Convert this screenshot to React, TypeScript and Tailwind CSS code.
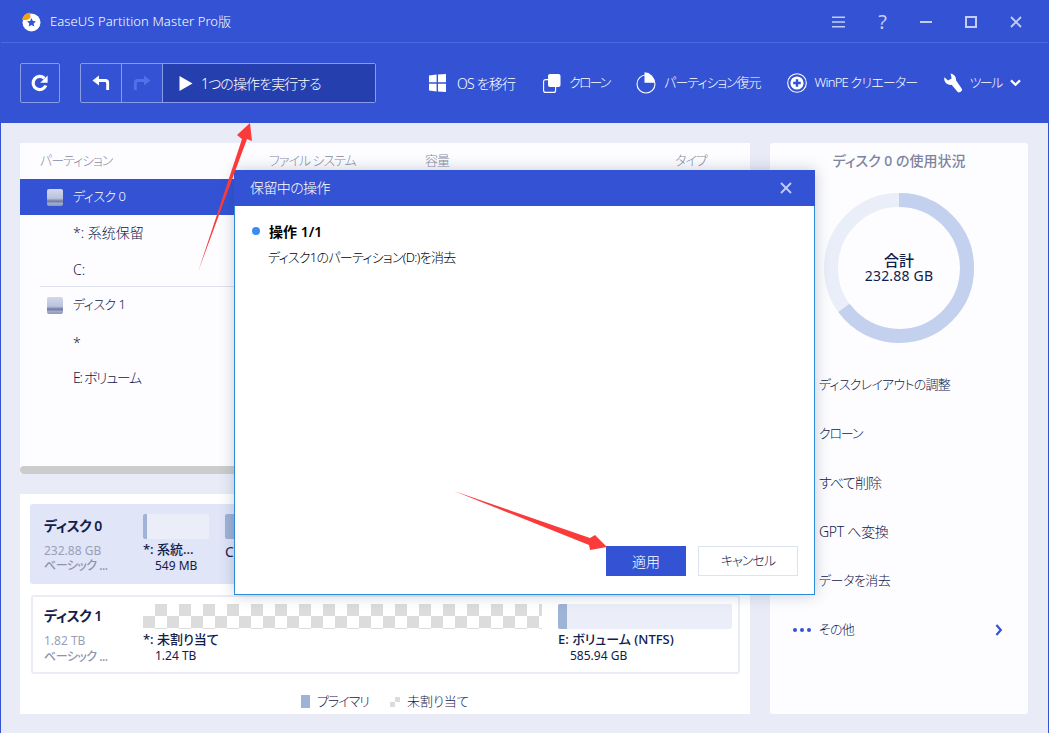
import React from "react";

const jp = "font-['Noto_Sans','Noto_Sans_CJK_JP',sans-serif] [font-feature-settings:'palt']";

function Logo() {
  return (
    <svg width="20" height="20" viewBox="0 0 20 20">
      <circle cx="10.5" cy="10.5" r="9" fill="#fff" />
      <path d="M1 8 A9 9 0 0 1 9 0.5 L9.5 6 L6 8 Z" fill="#f2a20c" />
      <path d="M10.5 6l1.4 2.9 3.1.4-2.3 2.1.6 3.1-2.8-1.5-2.8 1.5.6-3.1-2.3-2.1 3.1-.4z" fill="#3353d4" />
    </svg>
  );
}

function Refresh() {
  return (
    <svg width="20" height="20" viewBox="0 0 20 20" fill="none">
      <path d="M15.8 12.5A6.6 6.6 0 1 1 14.4 5.3" stroke="#fff" strokeWidth="3.2" />
      <path d="M17.6 2.4v7.4h-7.4z" fill="#fff" />
    </svg>
  );
}

function Undo({ color }: { color: string }) {
  return (
    <svg width="18" height="16" viewBox="0 0 18 16" fill="none">
      <path d="M7 0.5v3.6h6.5a3.6 3.6 0 0 1 3.6 3.6V15h-2.9V8.2a1.2 1.2 0 0 0-1.2-1.2H7v3.6L0.5 5.5z" fill={color} />
    </svg>
  );
}

function Windows() {
  return (
    <svg width="17" height="18" viewBox="0 0 17 18" fill="#fff" className="shrink-0">
      <path d="M0 1.5L7.6 0.6V8.3H0zM9 0.4L17 0V8.3H9zM0 9.7H7.6V17.4L0 16.5zM9 9.7H17V18L9 17.6z" />
    </svg>
  );
}

function Clone() {
  return (
    <svg width="18" height="20" viewBox="0 0 18 20" fill="none" className="shrink-0">
      <rect x="0.6" y="6.6" width="12" height="12.8" rx="2" stroke="#fff" strokeWidth="1.1" />
      <rect x="5" y="1" width="12.5" height="13" rx="2" fill="#fff" />
    </svg>
  );
}

function Pie() {
  return (
    <svg width="20" height="24" viewBox="0 0 20 24" fill="none" className="shrink-0">
      <circle cx="10" cy="13" r="9" stroke="#fff" strokeWidth="1.1" />
      <path d="M8.5 1.2A10.5 10.5 0 0 1 18.8 11.8H8.5z" fill="#fff" />
    </svg>
  );
}

function PlusCircle() {
  return (
    <svg width="20" height="20" viewBox="0 0 20 20" fill="none" className="shrink-0">
      <circle cx="10" cy="10" r="9.3" stroke="#fff" strokeWidth="1.1" />
      <circle cx="10" cy="10" r="6.6" fill="#fff" />
      <path d="M10 6.2v7.6M6.2 10h7.6" stroke="#3353d4" strokeWidth="2.4" />
    </svg>
  );
}

function Wrench() {
  return (
    <svg width="18" height="20" viewBox="0 0 18 20" fill="#fff" className="shrink-0">
      <path d="M6.6 0.6A6 6 0 0 1 12 7.2L17.6 15.6a2 2 0 0 1-.5 2.8l-1 .7a2 2 0 0 1-2.8-.5L7.6 11.8A6.2 6.2 0 0 1 .4 4.2L4 7.6 7.6 5.6 6.6 .6z" />
    </svg>
  );
}

function Chevron({ color, dir }: { color: string; dir: "down" | "right" }) {
  return dir === "down" ? (
    <svg width="11" height="8" viewBox="0 0 11 8" fill="none">
      <path d="M1 1.4l4.5 4.4L10 1.4" stroke={color} strokeWidth="2.2" />
    </svg>
  ) : (
    <svg width="8" height="12" viewBox="0 0 8 12" fill="none">
      <path d="M1.4 1l4.4 5-4.4 5" stroke={color} strokeWidth="2.2" />
    </svg>
  );
}

function DiskIcon() {
  return <div className="w-4 h-[17px] rounded-[2px] bg-[linear-gradient(#d3d9ec_0%,#b9c2dd_55%,#6f7aa5_72%,#a2abca_85%,#8d97bb_100%)]" />;
}

function ToolItem({ icon, label, className, text }: { icon: React.ReactNode; label: string; className: string; text: string }) {
  return (
    <div className={`flex items-center shrink-0 text-white font-light ${className}`}>
      {icon}
      <span className={`whitespace-nowrap ${text}`}>{label}</span>
    </div>
  );
}

function TreeRow({ label, disk, selected, text }: { label: string; disk?: boolean; selected?: boolean; text: string }) {
  return (
    <div className={`h-9 flex items-center font-light ${selected ? "bg-[#3353d4] text-white" : "text-[#11204a]"} ${disk ? "pl-[27px] gap-[10px]" : "pl-[53px]"}`}>
      {disk && <DiskIcon />}
      <span className={text}>{label}</span>
    </div>
  );
}

function MenuRow({ label, text }: { label: string; text: string }) {
  return <div className={`h-[49px] flex items-center pl-[49px] font-light text-[#11204a] ${text}`}>{label}</div>;
}

function PartLabel({ title, size }: { title: string; size: string }) {
  return (
    <div className="whitespace-nowrap">
      <div className="h-[15px] mt-[3px] leading-[15px] text-[13px] font-medium text-[#11204a]">{title}</div>
      <div className="h-[15px] mt-[1px] pl-3 leading-[15px] text-[12px] text-[#11204a]">{size}</div>
    </div>
  );
}

export default function App() {
  return (
    <div className={`w-[1049px] h-[733px] relative overflow-hidden bg-[#e9ecf7] border-x border-[#3353d4] ${jp}`}>
      {/* Header */}
      <div className="h-[123px] bg-[#3353d4] flex flex-col">
        <div className="h-[41px] mt-px flex items-center pl-5 text-white shrink-0">
          <Logo />
          <span className="ml-[9px] text-[13px] tracking-[0.1px] font-light whitespace-nowrap">EaseUS Partition Master Pro版</span>
          <div className="ml-auto flex items-center text-[#c3cef2]">
            <svg width="13" height="12" viewBox="0 0 13 12" fill="#c3cef2"><path d="M0 0.5h13v1.6H0zM0 5.2h13v1.6H0zM0 9.9h13v1.6H0z" /></svg>
            <span className="ml-[32px] w-[11px] text-[20px] leading-none text-center font-normal">?</span>
            <svg className="ml-[32px]" width="12" height="2" viewBox="0 0 12 2" fill="#c3cef2"><path d="M0 0h12v2H0z" /></svg>
            <svg className="ml-[33px]" width="12" height="12" viewBox="0 0 12 12" fill="none"><rect x="1" y="1" width="10" height="10" stroke="#c3cef2" strokeWidth="2" /></svg>
            <svg className="ml-[33px] mr-[26px]" width="12" height="12" viewBox="0 0 12 12" fill="none"><path d="M1 1l10 10M11 1L1 11" stroke="#c3cef2" strokeWidth="1.8" /></svg>
          </div>
        </div>
        <div className="h-px bg-[#4a6ae4] shrink-0" />
        <div className="flex-1 flex items-center pl-[19px]">
          <div className="w-10 h-10 shrink-0 border border-[#8a9ce8] rounded-[2px] flex items-center justify-center">
            <Refresh />
          </div>
          <div className="ml-5 w-[296px] h-10 shrink-0 border border-[#8a9ce8] rounded-[2px] flex">
            <div className="w-[41px] border-r border-[#8a9ce8] flex items-center justify-center"><Undo color="#fff" /></div>
            <div className="w-[41px] border-r border-[#8a9ce8] flex items-center justify-center">
              <div className="-scale-x-100 flex"><Undo color="#4f71ea" /></div>
            </div>
            <div className="flex-1 bg-[#2540ae] flex items-center pl-4 text-white text-[14px] tracking-[-0.9px] font-light">
              <svg width="14" height="15" viewBox="0 0 14 15" fill="#fff"><path d="M0.5 0L13.5 7.5 0.5 15z" /></svg>
              <span className="ml-2 whitespace-nowrap">1つの操作を実行する</span>
            </div>
          </div>
          <ToolItem className="ml-[53px] gap-[11px]" text="text-[14px] tracking-[-0.8px]" icon={<Windows />} label="OS を移行" />
          <ToolItem className="ml-[28px] gap-2" text="text-[13px] tracking-[-2px]" icon={<Clone />} label="クローン" />
          <ToolItem className="ml-[27px] gap-2" text="text-[13px] tracking-[-1px]" icon={<Pie />} label="パーティション復元" />
          <ToolItem className="ml-[26px] gap-2" text="text-[13px] tracking-[-0.8px]" icon={<PlusCircle />} label="WinPE クリエーター" />
          <ToolItem className="ml-[27px] gap-[7px]" text="text-[13px] tracking-[-1.5px]" icon={<Wrench />} label="ツール" />
          <div className="ml-2 shrink-0"><Chevron color="#fff" dir="down" /></div>
        </div>
      </div>

      {/* Body */}
      <div className="flex pl-[19px] pt-5 gap-5">
        <div className="w-[730px] flex flex-col">
          <div className="h-[331px] bg-[#fdfdff] relative flex flex-col">
            <div className="h-9 pb-px flex items-center text-[13px] tracking-[-1px] font-light text-[#868ca5] shrink-0">
              <span className="ml-5 w-[229px]">パーティション</span>
              <span className="w-[156px]">ファイル システム</span>
              <span className="w-[250px]">容量</span>
              <span>タイプ</span>
            </div>
            <TreeRow text="text-[13px] tracking-[-0.5px]" label="ディスク 0" disk selected />
            <TreeRow text="text-[14px] pb-px" label="*: 系统保留" />
            <TreeRow text="text-[14px]" label="C:" />
            <div className="h-px ml-5 bg-[#dfe2ee] -mt-px" />
            <TreeRow text="text-[13px] tracking-[-0.5px]" label="ディスク 1" disk />
            <TreeRow text="text-[14px] pt-[2px]" label="*" />
            <TreeRow text="text-[14px] tracking-[-1.3px]" label="E: ボリューム" />
            <div className="mt-auto h-2 w-[640px] rounded-full bg-[#cccccc]" />
          </div>

          <div className="mt-[20px] h-[220px] bg-white flex flex-col px-[10px] pt-[10px]">
            <div className="h-[80px] bg-[#e0e5f7] rounded-[3px] flex pl-[14px] pt-[10px]">
              <div className="w-[99px]">
                <div className="h-6 leading-6 text-[14px] tracking-[-0.5px] font-semibold text-[#11204a]">ディスク 0</div>
                <div className="mt-[5px] h-[15px] leading-[15px] text-[12px] text-[#9a9fb8]">232.88 GB</div>
                <div className="h-[15px] leading-[15px] text-[12px] tracking-[-0.5px] font-medium text-[#8f94ac]">ベーシック ...</div>
              </div>
              <div className="w-[82px] pt-0">
                <div className="w-[66px] h-[25px] mb-[2px] bg-[#ebeef8] rounded-[2px] flex"><div className="w-1 bg-[#9fb3d6] rounded-l-[2px]" /></div>
                <PartLabel title="*: 系統..." size="549 MB" />
              </div>
              <div>
                <div className="w-[80px] h-[25px] bg-[#ebeef8] rounded-[2px] flex"><div className="w-8 bg-[#9fb3d6] rounded-l-[2px]" /></div>
                <div className="mt-[2px] text-[14px] text-[#11204a]">C:</div>
              </div>
            </div>
            <div className="mt-[11px] ml-px h-[79px] border-2 border-[#eaedf6] rounded-[3px] flex pl-[11px] pt-[7px]">
              <div className="w-[99px]">
                <div className="h-6 leading-6 text-[14px] tracking-[-0.5px] font-semibold text-[#11204a]">ディスク 1</div>
                <div className="mt-[5px] h-[15px] leading-[15px] text-[12px] text-[#9a9fb8]">1.82 TB</div>
                <div className="mt-px h-[15px] leading-[15px] text-[12px] tracking-[-0.5px] font-medium text-[#8f94ac]">ベーシック ...</div>
              </div>
              <div className="w-[415px]">
                <div className="w-[399px] h-[25px] bg-[repeating-conic-gradient(#dcdcdc_0%_25%,#ffffff_0%_50%)] bg-[length:24px_24px]" />
                <PartLabel title="*: 未割り当て" size="1.24 TB" />
              </div>
              <div>
                <div className="w-[174px] h-[25px] bg-[#ebeef8] rounded-[2px] flex"><div className="w-[9px] bg-[#9fb3d6] rounded-l-[2px]" /></div>
                <PartLabel title="E: ボリューム (NTFS)" size="585.94 GB" />
              </div>
            </div>
            <div className="mt-[18px] flex items-center pl-[271px] font-light text-[#11204a]">
              <div className="w-[9px] h-[13px] bg-[#9fb3d6]" />
              <span className="ml-[7px] text-[13px] tracking-[-1px]">プライマリ</span>
              <div className="ml-[21px] w-[10px] h-[10px] bg-[repeating-conic-gradient(#dcdcdc_0%_25%,#ffffff_0%_50%)] bg-[length:10px_10px]" />
              <span className="ml-[7px] text-[13px]">未割り当て</span>
            </div>
          </div>
        </div>

        <div className="w-[258px] h-[571px] bg-[#fdfdff] rounded-[3px] flex flex-col">
          <div className="h-[34px] flex items-center justify-center text-[14px] font-medium text-[#7e849f]">ディスク 0 の使用状況</div>
          <div className="mt-4 mx-auto w-[150px] h-[150px] relative">
            <svg width="150" height="150" viewBox="0 0 150 150" fill="none">
              <circle cx="75" cy="75" r="68" stroke="#e9eef8" strokeWidth="14" />
              <circle cx="75" cy="75" r="68" stroke="#c3d1ee" strokeWidth="14" pathLength="100" strokeDasharray="65 35" transform="rotate(-90 75 75)" />
            </svg>
            <div className="absolute inset-0 flex flex-col items-center justify-center text-[#11204a]">
              <div className="text-[15px] leading-4 font-medium">合計</div>
              <div className="text-[14px] leading-4 tracking-[0.2px]">232.88 GB</div>
            </div>
          </div>
          <div className="mt-[17px]">
            <MenuRow text="text-[13px] tracking-[-0.75px]" label="ディスクレイアウトの調整" />
            <MenuRow text="text-[13px] tracking-[-1.2px]" label="クローン" />
            <MenuRow text="text-[14px] tracking-[-0.8px]" label="すべて削除" />
            <MenuRow text="text-[14px] tracking-[-0.3px]" label="GPT へ変換" />
            <MenuRow text="text-[13px] tracking-[-0.5px]" label="データを消去" />
            <div className="h-[49px] flex items-center pl-[23px] font-light text-[#11204a]">
              <svg width="18" height="4" viewBox="0 0 18 4" fill="#3353d4"><circle cx="2" cy="2" r="2" /><circle cx="9" cy="2" r="2" /><circle cx="16" cy="2" r="2" /></svg>
              <span className="ml-2 text-[13px] tracking-[-0.7px]">その他</span>
              <div className="ml-auto mr-[25px]"><Chevron color="#3353d4" dir="right" /></div>
            </div>
          </div>
        </div>
      </div>

      {/* Modal */}
      <div className="absolute left-[233px] top-[170px] w-[581px] h-[425px] bg-white border border-[#2d8cd8] border-t-0 shadow-[0_0_14px_rgba(40,50,90,0.25)] flex flex-col">
        <div className="h-9 -mx-px bg-[#3353d4] flex items-center pl-4 pr-[23px] text-white text-[14px] tracking-[-0.6px] font-light shrink-0">
          <span className="pb-[2px]">保留中の操作</span>
          <svg className="ml-auto" width="12" height="12" viewBox="0 0 12 12" fill="none"><path d="M1 1l10 10M11 1L1 11" stroke="#c3cef2" strokeWidth="1.8" /></svg>
        </div>
        <div className="pl-[17px] pt-[17px]">
          <div className="flex items-center h-4">
            <div className="w-2 h-2 rounded-full bg-[#3a8cf5]" />
            <span className="ml-[9px] text-[14px] font-bold text-black">操作 <span className="font-semibold">1/1</span></span>
          </div>
          <div className="mt-2 pl-4 text-[13px] tracking-[-0.7px] font-light leading-5 text-black">ディスク1のパーティション(D:)を消去</div>
        </div>
        <div className="mt-auto mb-[18px] flex justify-end gap-3 pr-4">
          <div className="w-20 h-[30px] bg-[#3353d4] text-white text-[14px] font-light flex items-center justify-center">適用</div>
          <div className="w-[100px] h-[30px] border border-[#dde2f0] text-[13px] tracking-[-1px] font-light text-[#11204a] flex items-center justify-center">キャンセル</div>
        </div>
      </div>

      {/* Annotation arrows */}
      <svg className="absolute left-0 top-0 pointer-events-none" width="1049" height="733" viewBox="0 0 1049 733">
        <polygon points="197,272 241,139 236,135 249,123 251,141 246,139" fill="#fb3a3a" />
        <polygon points="453,491 589,538 594,535 606,547 589,550 588,545" fill="#fb3a3a" />
      </svg>
    </div>
  );
}
